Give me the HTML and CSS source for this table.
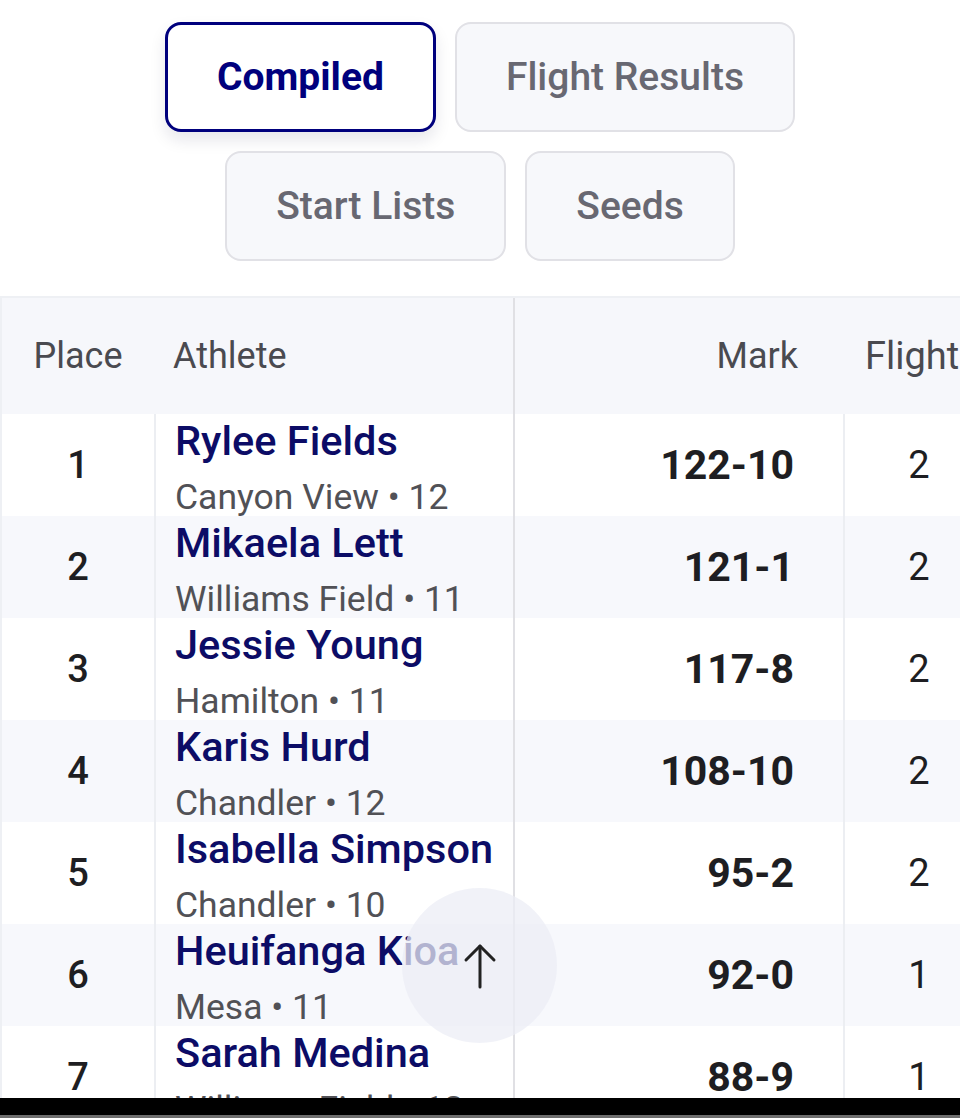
FILE: index.html
```html
<!DOCTYPE html>
<html lang="en">
<head>
<meta charset="utf-8">
<title>Compiled Results</title>
<link rel="stylesheet" href="styles.css">
</head>
<body>
<nav class="tabs">
  <button class="tab active">Compiled</button>
  <button class="tab">Flight Results</button>
  <button class="tab">Start Lists</button>
  <button class="tab">Seeds</button>
</nav>

<div class="table">
  <div class="row head">
    <div class="c place">Place</div>
    <div class="c athlete">Athlete</div>
    <div class="c mark">Mark</div>
    <div class="c flight">Flight</div>
  </div>
  <div class="row">
    <div class="c place">1</div>
    <div class="c athlete"><div class="name">Rylee Fields</div><div class="sub">Canyon View • 12</div></div>
    <div class="c mark">122-10</div>
    <div class="c flight">2</div>
  </div>
  <div class="row alt">
    <div class="c place">2</div>
    <div class="c athlete"><div class="name">Mikaela Lett</div><div class="sub">Williams Field • 11</div></div>
    <div class="c mark">121-1</div>
    <div class="c flight">2</div>
  </div>
  <div class="row">
    <div class="c place">3</div>
    <div class="c athlete"><div class="name">Jessie Young</div><div class="sub">Hamilton • 11</div></div>
    <div class="c mark">117-8</div>
    <div class="c flight">2</div>
  </div>
  <div class="row alt">
    <div class="c place">4</div>
    <div class="c athlete"><div class="name">Karis Hurd</div><div class="sub">Chandler • 12</div></div>
    <div class="c mark">108-10</div>
    <div class="c flight">2</div>
  </div>
  <div class="row">
    <div class="c place">5</div>
    <div class="c athlete"><div class="name">Isabella Simpson</div><div class="sub">Chandler • 10</div></div>
    <div class="c mark">95-2</div>
    <div class="c flight">2</div>
  </div>
  <div class="row alt">
    <div class="c place">6</div>
    <div class="c athlete"><div class="name">Heuifanga Kioa</div><div class="sub">Mesa • 11</div></div>
    <div class="c mark">92-0</div>
    <div class="c flight">1</div>
  </div>
  <div class="row">
    <div class="c place">7</div>
    <div class="c athlete"><div class="name">Sarah Medina</div><div class="sub">Williams Field • 12</div></div>
    <div class="c mark">88-9</div>
    <div class="c flight">1</div>
  </div>
</div>

<button class="to-top" aria-label="Back to top">
  <svg width="34" height="46" viewBox="0 0 34 46" fill="none" stroke="#222" stroke-width="3" stroke-linecap="round" stroke-linejoin="round">
    <path d="M17 44V3"/>
    <path d="M3 17L17 3L31 17"/>
  </svg>
</button>

<div class="sysbar"></div>
</body>
</html>
```

FILE: styles.css
```css
* { box-sizing: border-box; }

html, body {
  margin: 0;
  padding: 0;
  background: #ffffff;
  font-family: Roboto, "Liberation Sans", Arial, sans-serif;
  overflow: hidden;
  height: 1118px;
}

.tabs {
  display: flex;
  flex-wrap: wrap;
  justify-content: center;
  gap: 19px;
  width: 700px;
  margin: 0 auto;
  padding-top: 22px;
}

.tab {
  height: 110px;
  padding: 0 49px;
  border: 2px solid #e1e1e6;
  border-radius: 16px;
  background: #f7f8fb;
  color: #686872;
  font-family: Roboto, "Liberation Sans", Arial, sans-serif;
  font-size: 39px;
  font-weight: 500;
}

.tab.active {
  background: #ffffff;
  border: 3px solid #00007d;
  color: #00007d;
  font-weight: 700;
  box-shadow: 0 8px 16px rgba(20, 20, 60, 0.10);
}

.table {
  margin-top: 35px;
  width: 960px;
  overflow: hidden;
  border-top: 2px solid #eef0f4;
  border-left: 2px solid #eef0f4;
}

.row {
  display: grid;
  grid-template-columns: 152px 359px 330px 150px;
  height: 102px;
  background: #ffffff;
}

.row.alt { background: #f7f8fc; }

.row.head {
  height: 116px;
  background: #f6f7fb;
}

.c {
  display: flex;
  align-items: center;
  color: #1e1e22;
}

.row .athlete,
.row .flight { border-left: 2px solid #eceef2; }

.row .mark { border-left: 2px solid #e0e0e4; }

.place {
  justify-content: center;
  font-size: 38px;
  font-weight: 500;
}

.athlete {
  flex-direction: column;
  align-items: flex-start;
  justify-content: flex-start;
  padding: 5px 0 0 19px;
}

.mark {
  justify-content: flex-end;
  padding-right: 49px;
  font-size: 41px;
  font-weight: 700;
}

.flight {
  justify-content: center;
  font-size: 38px;
  font-weight: 400;
}

.row.head .c {
  color: #4a4a50;
  font-size: 36px;
  font-weight: 400;
  border-left: none;
}

.row.head .athlete {
  flex-direction: row;
  align-items: center;
  padding: 0 0 0 19px;
}

.row.head .mark {
  border-left: 2px solid #e0e0e4;
  padding-right: 45px;
}

.row.head .flight {
  justify-content: flex-start;
  padding-left: 22px;
  font-size: 38px;
}

.name {
  color: #0c0c66;
  font-size: 41.5px;
  font-weight: 500;
  line-height: 44px;
  white-space: nowrap;
}

.sub {
  margin-top: 16px;
  color: #515156;
  font-size: 35.5px;
  font-weight: 400;
  line-height: 36px;
  white-space: nowrap;
}

.to-top {
  position: fixed;
  left: 402px;
  top: 888px;
  width: 155px;
  height: 155px;
  border: none;
  border-radius: 50%;
  background: rgba(236, 237, 246, 0.74);
  display: flex;
  align-items: center;
  justify-content: center;
  padding: 0;
}

.sysbar {
  position: fixed;
  left: 0;
  right: 0;
  bottom: 0;
  height: 20px;
  background: #000000;
  border-bottom: 3px solid #6e6e6e;
}
```
